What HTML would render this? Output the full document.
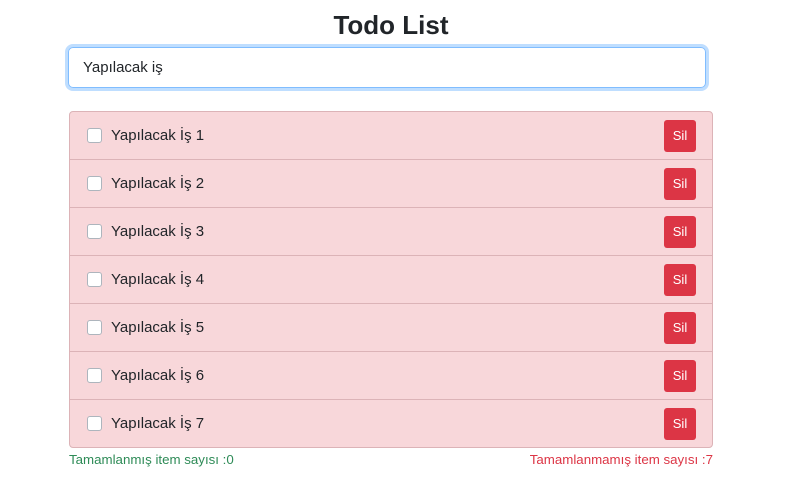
<!DOCTYPE html>
<html><head><meta charset="utf-8"><style>
*{box-sizing:border-box;margin:0;padding:0}
body{width:795px;height:499px;background:#fff;font-family:"Liberation Sans",sans-serif;color:#212529;position:relative;overflow:hidden}
h1{position:absolute;top:8px;left:0;width:782px;text-align:center;font-size:26px;font-weight:bold;line-height:34px}
.inp{position:absolute;left:68px;top:47px;width:638px;height:41px;border:1px solid #80bdff;border-radius:5px;box-shadow:0 0 0 3px rgba(0,123,255,.25);padding-left:14px;font-size:15px;line-height:39px}
.list{position:absolute;left:69px;top:111px;width:644px;height:337px;border:1px solid #dcb3b7;border-radius:4px;background:#f8d7da;overflow:hidden}
.row{height:48px;border-bottom:1px solid #dcb3b7;position:relative}
.row:last-child{border-bottom:none}
.cb{position:absolute;left:17px;top:16px;width:15px;height:15px;background:#fff;border:1px solid #adb5bd;border-radius:3px}
.t{position:absolute;left:41px;top:14px;font-size:15px;line-height:20px}
.b{position:absolute;left:594px;top:8px;width:32px;height:32px;background:#dc3545;border-radius:3px;color:#fff;font-size:13px;line-height:32px;text-align:center}
.f{position:absolute;top:452px;font-size:13.3px;line-height:16px}
</style></head><body>
<h1>Todo List</h1>
<div class="inp">Yapılacak iş</div>
<div class="list">
<div class="row"><div class="cb"></div><div class="t">Yapılacak İş 1</div><div class="b">Sil</div></div>
<div class="row"><div class="cb"></div><div class="t">Yapılacak İş 2</div><div class="b">Sil</div></div>
<div class="row"><div class="cb"></div><div class="t">Yapılacak İş 3</div><div class="b">Sil</div></div>
<div class="row"><div class="cb"></div><div class="t">Yapılacak İş 4</div><div class="b">Sil</div></div>
<div class="row"><div class="cb"></div><div class="t">Yapılacak İş 5</div><div class="b">Sil</div></div>
<div class="row"><div class="cb"></div><div class="t">Yapılacak İş 6</div><div class="b">Sil</div></div>
<div class="row"><div class="cb"></div><div class="t">Yapılacak İş 7</div><div class="b">Sil</div></div>
</div>
<div class="f" style="left:69px;color:#2e8b57">Tamamlanmış item sayısı :0</div>
<div class="f" style="right:82px;color:#dc3545">Tamamlanmamış item sayısı :7</div>
</body></html>
